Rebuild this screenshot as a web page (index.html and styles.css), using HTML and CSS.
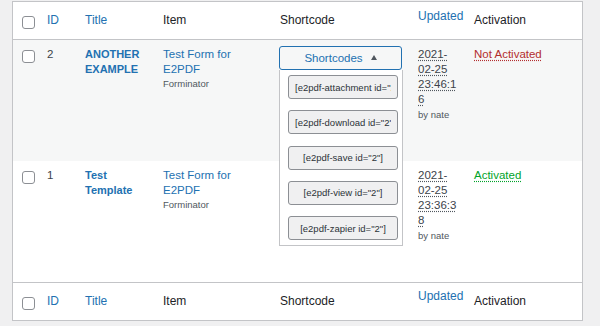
FILE: index.html
```html
<!DOCTYPE html>
<html lang="en">
<head>
  <meta charset="UTF-8" />
  <title>E2PDF Templates</title>
  <link rel="stylesheet" href="styles.css">
</head>
<body>

  <table class="forms">
    <colgroup>
      <col class="w-cb">
      <col class="w-id">
      <col class="w-title">
      <col class="w-item">
      <col class="w-shortcode">
      <col class="w-updated">
      <col class="w-activation">
    </colgroup>
    <thead>
      <tr>
        <th class="col-cb"><input type="checkbox"></th>
        <th><a href="#">ID</a></th>
        <th><a href="#">Title</a></th>
        <th>Item</th>
        <th>Shortcode</th>
        <th class="col-updated"><a href="#">Updated</a></th>
        <th>Activation</th>
      </tr>
    </thead>
    <tbody>
      <tr class="alt">
        <td class="col-cb"><input type="checkbox"></td>
        <td>2</td>
        <td><a href="#" class="row-title">ANOTHER EXAMPLE</a></td>
        <td><a href="#">Test Form for E2PDF</a><small>Forminator</small></td>
        <td class="col-shortcode">
          <div class="shortcodes">
            <button class="sc-toggle">Shortcodes <span class="caret"></span></button>
            <div class="sc-menu">
              <input type="text" readonly value='[e2pdf-attachment id="2"]'>
              <input type="text" readonly value='[e2pdf-download id="2"]'>
              <input type="text" readonly value='[e2pdf-save id="2"]'>
              <input type="text" readonly value='[e2pdf-view id="2"]'>
              <input type="text" readonly value='[e2pdf-zapier id="2"]'>
            </div>
          </div>
        </td>
        <td class="col-date"><abbr>2021-02-25 23:46:16</abbr><small>by nate</small></td>
        <td><a href="#" class="status off">Not Activated</a></td>
      </tr>
      <tr>
        <td class="col-cb"><input type="checkbox"></td>
        <td>1</td>
        <td><a href="#" class="row-title">Test Template</a></td>
        <td><a href="#">Test Form for E2PDF</a><small>Forminator</small></td>
        <td class="col-shortcode"></td>
        <td class="col-date"><abbr>2021-02-25 23:36:38</abbr><small>by nate</small></td>
        <td><a href="#" class="status on">Activated</a></td>
      </tr>
    </tbody>
    <tfoot>
      <tr>
        <th class="col-cb"><input type="checkbox"></th>
        <th><a href="#">ID</a></th>
        <th><a href="#">Title</a></th>
        <th>Item</th>
        <th>Shortcode</th>
        <th class="col-updated"><a href="#">Updated</a></th>
        <th>Activation</th>
      </tr>
    </tfoot>
  </table>

</body>
</html>
```

FILE: styles.css
```css
body {
  margin: 0;
  padding: 1px 17px 0 12px;
  background: #f0f0f1;
  font-family: "Liberation Sans", Arial, sans-serif;
  color: #1d2327;
}

a {
  color: #2271b1;
  text-decoration: none;
}

.forms {
  width: 571px;
  table-layout: fixed;
  border-collapse: separate;
  border-spacing: 0;
  border: 1px solid #c3c4c7;
  background: #fff;
}

.w-cb { width: 24px; }
.w-id { width: 38px; }
.w-title { width: 78px; }
.w-item { width: 117px; }
.w-shortcode { width: 138px; }
.w-updated { width: 56px; }
.w-activation { width: 118px; }

th {
  font-size: 12px;
  font-weight: normal;
  line-height: 15px;
  text-align: left;
  padding: 11px 10px;
  vertical-align: middle;
  color: #1d2327;
}

thead th {
  border-bottom: 1px solid #c3c4c7;
}

tfoot th {
  border-top: 1px solid #c3c4c7;
}

th.col-updated {
  vertical-align: top;
  padding-top: 7px;
}

tfoot th.col-updated {
  padding-top: 6px;
}

.col-cb {
  vertical-align: top;
  padding: 14px 0 0 9px;
}

td.col-cb {
  padding-top: 10px;
}

input[type="checkbox"] {
  appearance: none;
  display: block;
  margin: 0;
  width: 13px;
  height: 13px;
  border: 1px solid #8c8f94;
  border-radius: 3px;
  background: #fff;
}

tbody tr {
  height: 121px;
}

tbody tr.alt {
  background: #f6f7f7;
}

td {
  font-size: 11.5px;
  line-height: 15px;
  padding: 7px 10px;
  vertical-align: top;
  color: #3c434a;
}

.row-title {
  font-size: 11px;
  font-weight: bold;
}

td small {
  display: block;
  font-size: 9.5px;
  line-height: 13px;
  color: #50575e;
}

.col-date {
  padding-right: 4px;
  overflow-wrap: anywhere;
}

.col-date abbr {
  text-decoration: underline dotted #50575e;
  text-underline-offset: 2px;
}

.col-date small {
  margin-top: 1px;
}

.status.off {
  color: #b32d2e;
  text-decoration: underline dotted #b32d2e;
  text-underline-offset: 2px;
}

.status.on {
  color: #00a32a;
  text-decoration: underline dotted #00a32a;
  text-underline-offset: 2px;
}

td.col-shortcode {
  padding: 6px 6px 0 9px;
}

.shortcodes {
  position: relative;
  width: 123px;
}

.sc-toggle {
  display: flex;
  align-items: center;
  justify-content: center;
  gap: 8px;
  width: 123px;
  height: 24px;
  padding: 0;
  background: #f6f7f7;
  border: 1px solid #2271b1;
  border-radius: 3px;
  color: #2271b1;
  font-family: inherit;
  font-size: 11.5px;
}

.caret {
  width: 0;
  height: 0;
  border-left: 3.5px solid transparent;
  border-right: 3.5px solid transparent;
  border-bottom: 5px solid #50575e;
  margin-bottom: 1px;
}

.sc-menu {
  position: absolute;
  top: 100%;
  left: 0;
  z-index: 10;
  box-sizing: border-box;
  width: 124px;
  display: flex;
  flex-direction: column;
  gap: 11.25px;
  padding: 5px 4px 5px 8px;
  background: #fff;
  border: 1px solid #c3c4c7;
  border-top: none;
}

.sc-menu input {
  box-sizing: border-box;
  width: 110px;
  height: 24px;
  margin: 0;
  padding: 0 6px;
  background: #f0f0f1;
  border: 1px solid #8c8f94;
  border-radius: 3px;
  font-family: inherit;
  font-size: 9.5px;
  color: #2c3338;
  text-align: center;
  outline: none;
}
```
